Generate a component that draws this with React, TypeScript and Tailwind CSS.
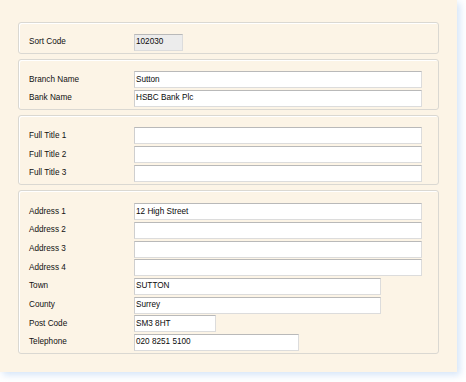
import React from "react";

type Field = { label: string; value?: string; width: string; readOnly?: boolean };

const groups: { pt: string; fields: Field[] }[] = [
  { pt: "pt-[11px]", fields: [{ label: "Sort Code", value: "102030", width: "w-[49px]", readOnly: true }] },
  {
    pt: "pt-[11px]",
    fields: [
      { label: "Branch Name", value: "Sutton", width: "w-[288px]" },
      { label: "Bank Name", value: "HSBC Bank Plc", width: "w-[288px]" },
    ],
  },
  {
    pt: "pt-[11px]",
    fields: [
      { label: "Full Title 1", width: "w-[288px]" },
      { label: "Full Title 2", width: "w-[288px]" },
      { label: "Full Title 3", width: "w-[288px]" },
    ],
  },
  {
    pt: "pt-[12px]",
    fields: [
      { label: "Address 1", value: "12 High Street", width: "w-[288px]" },
      { label: "Address 2", width: "w-[288px]" },
      { label: "Address 3", width: "w-[288px]" },
      { label: "Address 4", width: "w-[288px]" },
      { label: "Town", value: "SUTTON", width: "w-[247px]" },
      { label: "County", value: "Surrey", width: "w-[247px]" },
      { label: "Post Code", value: "SM3 8HT", width: "w-[82px]" },
      { label: "Telephone", value: "020 8251 5100", width: "w-[165px]" },
    ],
  },
];

function Row({ f }: { f: Field }) {
  return (
    <div className="flex items-center h-[17px]">
      <div className="w-[105px] text-[#111]">{f.label}</div>
      <div
        className={`${f.width} h-[17px] flex items-center pl-[1px] border border-[#dcdcdc] border-t-[#b9b9b9] border-l-[#cfcfcf] ${
          f.readOnly ? "bg-[#ececec]" : "bg-white"
        } text-[#0a0a0a]`}
      >
        {f.value}
      </div>
    </div>
  );
}

export default function App() {
  return (
    <div className="w-[466px] h-[382px] bg-white">
      <div
        className="w-[457px] h-[372px] bg-[#fcf4e6] pt-[22px] pl-[18px] flex flex-col gap-[5.4px] shadow-[3px_3px_7px_rgba(160,195,240,0.45)] text-[8.2px] leading-none"
        style={{ fontFamily: '"Liberation Sans", Arial, sans-serif' }}
      >
        {groups.map((g, i) => (
          <div
            key={i}
            className={`w-[421px] border border-[#dad8d2] rounded-[3px] shadow-[inset_1px_1px_0_#ffffff] ${g.pt} pb-[2px] pl-[10px] flex flex-col gap-[1.7px]`}
          >
            {g.fields.map((f) => (
              <Row key={f.label} f={f} />
            ))}
          </div>
        ))}
      </div>
    </div>
  );
}
